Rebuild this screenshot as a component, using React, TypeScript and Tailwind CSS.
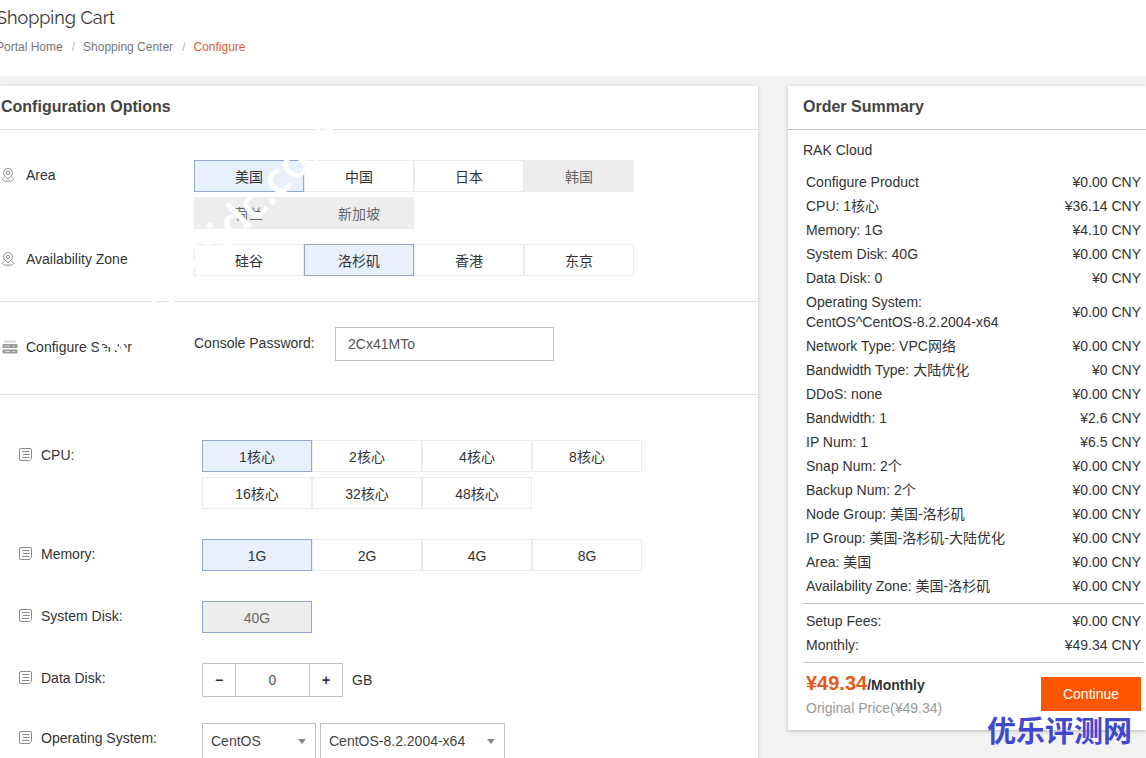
import React, { useState } from "react";
import clsx from "clsx";

type Option = {
	label: string;
	disabled?: boolean;
};

type OptionGroupProps = {
	label: string;
	options: Option[];
	initial?: string;
};

const areas: Option[] = [
	{ label: "美国" },
	{ label: "中国" },
	{ label: "日本" },
	{ label: "韩国", disabled: true },
	{ label: "荷兰", disabled: true },
	{ label: "新加坡", disabled: true },
];

const zones: Option[] = [
	{ label: "硅谷" },
	{ label: "洛杉矶" },
	{ label: "香港" },
	{ label: "东京" },
];

const cpus: Option[] = [
	{ label: "1核心" },
	{ label: "2核心" },
	{ label: "4核心" },
	{ label: "8核心" },
	{ label: "16核心" },
	{ label: "32核心" },
	{ label: "48核心" },
];

const memory: Option[] = [
	{ label: "1G" },
	{ label: "2G" },
	{ label: "4G" },
	{ label: "8G" },
];

const summary = [
	["Configure Product", "¥0.00 CNY"],
	["CPU: 1核心", "¥36.14 CNY"],
	["Memory: 1G", "¥4.10 CNY"],
	["System Disk: 40G", "¥0.00 CNY"],
	["Data Disk: 0", "¥0 CNY"],
	["Operating System: CentOS^CentOS-8.2.2004-x64", "¥0.00 CNY"],
	["Network Type: VPC网络", "¥0.00 CNY"],
	["Bandwidth Type: 大陆优化", "¥0 CNY"],
	["DDoS: none", "¥0.00 CNY"],
	["Bandwidth: 1", "¥2.6 CNY"],
	["IP Num: 1", "¥6.5 CNY"],
	["Snap Num: 2个", "¥0.00 CNY"],
	["Backup Num: 2个", "¥0.00 CNY"],
	["Node Group: 美国-洛杉矶", "¥0.00 CNY"],
	["IP Group: 美国-洛杉矶-大陆优化", "¥0.00 CNY"],
	["Area: 美国", "¥0.00 CNY"],
	["Availability Zone: 美国-洛杉矶", "¥0.00 CNY"],
];

const totals = [
	["Setup Fees:", "¥0.00 CNY"],
	["Monthly:", "¥49.34 CNY"],
];

function PinIcon() {
	return (
		<svg viewBox="0 0 14 14" className="h-[14px] w-[14px] shrink-0" fill="none" stroke="#8c8c8c" aria-hidden="true">
			<path d="M7 10.8C4.6 9 2.6 7.2 2.6 4.9a4.4 4.4 0 0 1 8.8 0c0 2.3-2 4.1-4.4 5.9Z" />
			<circle cx="7" cy="4.9" r="1.7" />
			<path d="M3.6 9.3c-1.6.5-2.3 1.3-2 2.4.3 1 1.4 1.4 2.8 1.4h5.2c1.4 0 2.5-.4 2.8-1.4.3-1.1-.4-1.9-2-2.4" />
		</svg>
	);
}

function ServerIcon() {
	return (
		<svg viewBox="0 0 16 14" className="h-[14px] w-4 shrink-0" aria-hidden="true">
			<path d="M3 .5h10l1.5 2h-13Z" fill="#d5d5d5" />
			<rect x="0.5" y="4" width="15" height="4" rx="1" fill="#9a9a9a" />
			<rect x="0.5" y="9.5" width="15" height="4" rx="1" fill="#9a9a9a" />
			<path d="M3 6h5M3 11.5h5M10.5 6h2.5M10.5 11.5h2.5" stroke="#dcdcdc" />
		</svg>
	);
}

function ListIcon() {
	return (
		<svg viewBox="0 0 14 14" className="h-[14px] w-[14px] shrink-0" fill="none" stroke="#8a8a8a" aria-hidden="true">
			<path d="M12.5 10V2A1.5 1.5 0 0 0 11 .5H2A1.5 1.5 0 0 0 .5 2v9A1.5 1.5 0 0 0 2 12.5h8.5M10.5 12.5l2-2" />
			<path d="M3 3.5h7.5M4 6.5h6.5M3 9.5h7.5" />
		</svg>
	);
}

function OptionGroup({ label, options, initial }: OptionGroupProps) {
	const [selected, setSelected] = useState(initial);

	return (
		<div role="group" aria-label={label} className="flex max-w-[440px] flex-1 flex-wrap gap-y-[5px]">
			{options.map((option) => {
				const active = option.label === selected;
				return (
					<button
						key={option.label}
						type="button"
						disabled={option.disabled}
						aria-pressed={active}
						onClick={() => setSelected(option.label)}
						className={clsx(
							"h-8 w-[110px] border pt-[2px] text-center",
							active && "border-[#92a7d0]",
							!active && (option.disabled ? "border-[#ededed]" : "border-[#ebebeb]"),
							option.disabled && "bg-[#ededed] text-[#666]",
							!option.disabled && (active ? "bg-[#e8effd]" : "bg-white")
						)}>
						{option.label}
					</button>
				);
			})}
		</div>
	);
}

type FieldProps = {
	label: string;
	htmlFor?: string;
	children: React.ReactNode;
};

function Field({ label, htmlFor, children }: FieldProps) {
	return (
		<div className="flex items-start">
			<div className="flex w-[183px] shrink-0 items-center gap-2 pt-[5px]">
				<ListIcon />
				{htmlFor ? <label htmlFor={htmlFor}>{label}</label> : <span>{label}</span>}
			</div>
			{children}
		</div>
	);
}

type SelectProps = React.SelectHTMLAttributes<HTMLSelectElement>;

function Select({ className, children, ...rest }: SelectProps) {
	return (
		<div className="relative">
			<select
				className={clsx("h-9 appearance-none border border-[#c2c2c2] bg-white pl-2 text-[#444]", className)}
				{...rest}>
				{children}
			</select>
			<svg viewBox="0 0 8 5" className="pointer-events-none absolute top-4 right-[10px] h-[5px] w-2" aria-hidden="true">
				<path d="M0 0h8L4 5Z" fill="#888" />
			</svg>
		</div>
	);
}

function DataDisk() {
	const [size, setSize] = useState(0);

	return (
		<div className="-mb-1 flex items-center">
			<div className="flex h-[34px] border border-[#c2c2c2]">
				<button
					type="button"
					aria-label="Decrease"
					onClick={() => setSize((v) => Math.max(0, v - 10))}
					className="w-8 font-bold">
					−
				</button>
				<input
					id="data-disk"
					value={size}
					onChange={(e) => setSize(Number(e.target.value) || 0)}
					className="w-[75px] border-x border-[#c2c2c2] text-center text-[#555]"
				/>
				<button
					type="button"
					aria-label="Increase"
					onClick={() => setSize((v) => v + 10)}
					className="w-8 font-bold">
					+
				</button>
			</div>
			<span className="pl-[9px]">GB</span>
		</div>
	);
}

function Configuration() {
	const [password, setPassword] = useState("2Cx41MTo");

	return (
		<section className="relative min-w-0 flex-1 bg-white shadow-[0_1px_4px_rgba(0,0,0,0.2)]">
			<h2 className="h-11 border-b border-[#dfdfdf] pl-px text-base leading-[42px] font-bold text-[#444]">
				Configuration Options
			</h2>

			<div className="flex flex-col gap-[15px] border-b border-[#dfdfdf] pt-[30px] pb-[25px]">
				<div className="flex items-start">
					<div className="flex w-[194px] shrink-0 items-center gap-[11px] pt-[5px] pl-px">
						<PinIcon />
						<span>Area</span>
					</div>
					<OptionGroup label="Area" options={areas} initial="美国" />
				</div>
				<div className="flex items-start">
					<div className="flex w-[194px] shrink-0 items-center gap-[11px] pt-[5px] pl-px">
						<PinIcon />
						<span>Availability Zone</span>
					</div>
					<OptionGroup label="Availability Zone" options={zones} initial="洛杉矶" />
				</div>
			</div>

			<div className="flex items-start border-b border-[#dfdfdf] pt-[25px] pb-[33px]">
				<div className="flex w-[194px] shrink-0 items-center gap-2 pt-[10px] pl-[2px]">
					<ServerIcon />
					<span>Configure Server</span>
				</div>
				<label htmlFor="console-password" className="w-[141px] pt-[6px]">
					Console Password:
				</label>
				<input
					id="console-password"
					value={password}
					onChange={(e) => setPassword(e.target.value)}
					className="h-[34px] w-[219px] border border-[#c2c2c2] px-3 text-[#555]"
				/>
			</div>

			<div className="flex flex-col gap-[30px] pt-[45px] pb-8 pl-[19px]">
				<Field label="CPU:">
					<OptionGroup label="CPU" options={cpus} initial="1核心" />
				</Field>
				<Field label="Memory:">
					<OptionGroup label="Memory" options={memory} initial="1G" />
				</Field>
				<Field label="System Disk:">
					<OptionGroup label="System Disk" options={[{ label: "40G", disabled: true }]} initial="40G" />
				</Field>
				<Field label="Data Disk:" htmlFor="data-disk">
					<DataDisk />
				</Field>
				<Field label="Operating System:" htmlFor="os-family">
					<div className="flex gap-1">
						<Select id="os-family" className="w-[114px]">
							<option>CentOS</option>
						</Select>
						<Select aria-label="Version" className="w-[185px]">
							<option>CentOS-8.2.2004-x64</option>
						</Select>
					</div>
				</Field>
			</div>

			{/* Watermark */}
			<div
				aria-hidden="true"
				className="pointer-events-none absolute top-[140px] left-[29px] -rotate-45 font-['Open_Sans',sans-serif] text-[44px] leading-none font-semibold whitespace-nowrap text-white">
				www.rakidc.com
			</div>
		</section>
	);
}

function Rows({ rows }: { rows: string[][] }) {
	return (
		<table className="w-full">
			<tbody>
				{rows.map(([name, price]) => (
					<tr key={name}>
						<td className="w-[230px] px-[3px] py-[2px]">{name}</td>
						<td className="px-[3px] py-[2px] text-right whitespace-nowrap">{price}</td>
					</tr>
				))}
			</tbody>
		</table>
	);
}

function OrderSummary() {
	return (
		<aside className="relative w-[358px] shrink-0 bg-white shadow-[0_1px_4px_rgba(0,0,0,0.25)]">
			<h2 className="h-11 border-b border-[#c4c4c4] pl-[15px] text-base leading-[42px] font-bold text-[#444]">
				Order Summary
			</h2>
			<div className="pt-[10px] pr-[2px] pb-3 pl-[15px]">
				<p className="mb-[10px]">RAK Cloud</p>
				<Rows rows={summary} />
				<div className="mt-[5px] border-y border-[#c4c4c4] py-[5px]">
					<Rows rows={totals} />
				</div>
				<div className="flex items-center justify-between px-[3px] pt-[6px]">
					<div>
						<p className="font-bold">
							<span className="text-xl text-[#e05a1c]">¥49.34</span>/Monthly
						</p>
						<p className="pt-px text-[#999]">Original Price(¥49.34)</p>
					</div>
					<button type="button" className="h-[34px] w-[100px] bg-[#fe5500] text-white">
						Continue
					</button>
				</div>
			</div>
			<div
				aria-hidden="true"
				className="pointer-events-none absolute right-[14px] -bottom-[18px] text-[29px] leading-8 font-bold text-[#4048d0]">
				优乐评测网
			</div>
		</aside>
	);
}

export default function App() {
	return (
		<div className="min-h-screen overflow-x-hidden bg-[#f3f3f3] font-['Liberation_Sans','Noto_Sans_CJK_SC',sans-serif] text-sm leading-5 text-[#333]">
			<header className="h-[76px] bg-white pt-[6px]">
				<h1 className="-ml-1 font-['Raleway','Open_Sans',sans-serif] text-lg leading-6">Shopping Cart</h1>
				<nav aria-label="Breadcrumb" className="-ml-1 flex pt-[9px] text-xs text-[#777]">
					<a href="#">Portal Home</a>
					<span className="pr-2 pl-[9px] text-[#bbb]">/</span>
					<a href="#">Shopping Center</a>
					<span className="pr-2 pl-[9px] text-[#bbb]">/</span>
					<a href="#" aria-current="page" className="text-[#d9602a]">
						Configure
					</a>
				</nav>
			</header>

			<main className="flex items-start gap-[30px] pt-[10px]">
				<Configuration />
				<OrderSummary />
			</main>
		</div>
	);
}
